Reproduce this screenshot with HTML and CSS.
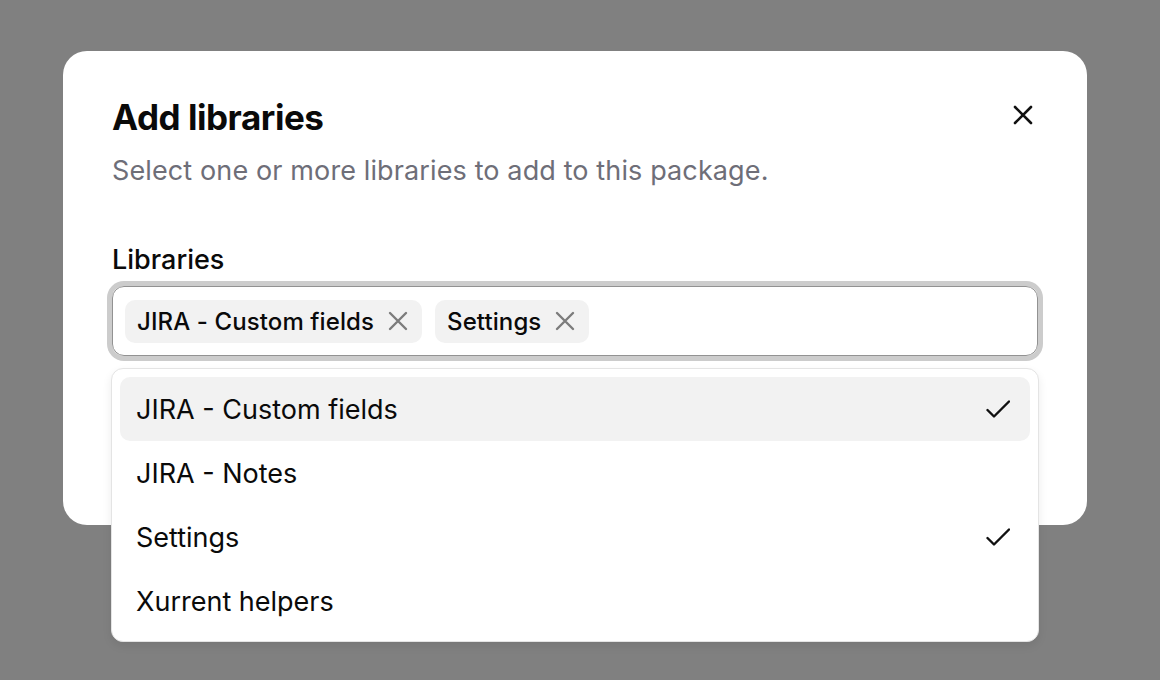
FILE: index.html
```html
<!DOCTYPE html>
<html>
<head>
<meta charset="utf-8">
<link rel="stylesheet" href="styles.css">
</head>
<body>
<div class="stage">
  <div class="modal">
    <div class="header">
      <h1 class="title">Add libraries</h1>
      <button class="close" aria-label="Close">
        <svg width="20" height="20" viewBox="0 0 20 20"><path d="M2 2L18 18M18 2L2 18" stroke="#111" stroke-width="2.6" stroke-linecap="round"/></svg>
      </button>
    </div>
    <p class="subtitle">Select one or more libraries to add to this package.</p>
    <div class="field">
      <label class="label">Libraries</label>
      <div class="combo">
        <div class="input">
          <span class="chip">JIRA - Custom fields
            <svg class="chip-x" width="20" height="20" viewBox="0 0 20 20"><path d="M2 2L18 18M18 2L2 18" stroke="#7c7c7c" stroke-width="2.4" stroke-linecap="round"/></svg>
          </span>
          <span class="chip">Settings
            <svg class="chip-x" width="20" height="20" viewBox="0 0 20 20"><path d="M2 2L18 18M18 2L2 18" stroke="#7c7c7c" stroke-width="2.4" stroke-linecap="round"/></svg>
          </span>
        </div>
        <ul class="menu">
          <li class="item active"><span>JIRA - Custom fields</span>
            <svg class="check" width="24" height="24" viewBox="0 0 24 24"><path d="M1.5 13L8 19.5L23 4.5" fill="none" stroke="#111" stroke-width="2.4" stroke-linecap="round" stroke-linejoin="round"/></svg>
          </li>
          <li class="item"><span>JIRA - Notes</span></li>
          <li class="item"><span>Settings</span>
            <svg class="check" width="24" height="24" viewBox="0 0 24 24"><path d="M1.5 13L8 19.5L23 4.5" fill="none" stroke="#111" stroke-width="2.4" stroke-linecap="round" stroke-linejoin="round"/></svg>
          </li>
          <li class="item"><span>Xurrent helpers</span></li>
        </ul>
      </div>
    </div>
  </div>
</div>
</body>
</html>
```

FILE: styles.css
```css
* { box-sizing: border-box; }
html, body {
  margin: 0;
  padding: 0;
  background: #808080;
  font-family: Inter, "Noto Sans", sans-serif;
  color: #0a0a0a;
}
.stage {
  width: 1160px;
  height: 680px;
  padding: 51px 0 0 63px;
  overflow: hidden;
}
.modal {
  width: 1024px;
  height: 474px;
  background: #fff;
  border-radius: 24px;
  padding: 44px 49px 0 49px;
}
.header {
  display: flex;
  justify-content: space-between;
  align-items: flex-start;
}
.title {
  margin: 0;
  font-size: 35px;
  line-height: 44px;
  font-weight: 700;
  letter-spacing: -0.45px;
}
.close {
  border: 0;
  background: none;
  padding: 0;
  margin: 10px 5px 0 0;
  width: 20px;
  height: 20px;
  display: flex;
}
.subtitle {
  margin: 16px 0 0 0;
  font-size: 27px;
  line-height: 32px;
  color: #6e6e78;
  letter-spacing: 0.12px;
}
.field {
  margin-top: 57px;
}
.label {
  display: block;
  font-size: 27px;
  line-height: 32px;
  font-weight: 500;
}
.combo {
  position: relative;
  margin-top: 10px;
}
.input {
  height: 70px;
  border: 1.5px solid #929292;
  border-radius: 12px;
  box-shadow: 0 0 0 5px #cccccc;
  padding: 11.5px 12px;
  display: flex;
  gap: 13px;
  align-items: center;
}
.chip {
  height: 43px;
  display: flex;
  align-items: center;
  gap: 14px;
  padding: 0 14px 0 12px;
  background: #f2f2f2;
  border-radius: 10px;
  font-size: 24px;
  font-weight: 500;
  letter-spacing: 0.1px;
}
.chip-x { flex: none; }
.menu {
  position: absolute;
  left: -1px;
  right: -1px;
  top: 82px;
  margin: 0;
  padding: 8px;
  list-style: none;
  background: #fff;
  border: 1px solid #e4e4e4;
  border-radius: 12px;
  box-shadow: 0 4px 10px rgba(0,0,0,0.08);
}
.item {
  height: 64px;
  display: flex;
  align-items: center;
  justify-content: space-between;
  padding: 0 20px 0 16px;
  border-radius: 10px;
  font-size: 27px;
}
.item.active { background: #f2f2f2; }
.check { flex: none; }
```
